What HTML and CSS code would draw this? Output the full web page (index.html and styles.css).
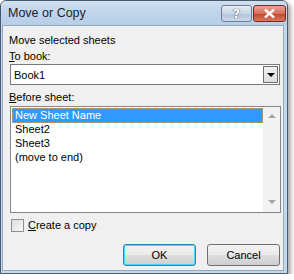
FILE: index.html
```html
<!DOCTYPE html>
<html lang="en">
<head>
    <meta charset="UTF-8">
    <title>Move or Copy</title>

    <link rel="stylesheet" href="styles.css">
</head>
<body>

<div class="window">
    <div class="titlebar">
        <span class="title">Move or Copy</span>
        <div class="caption-buttons">
            <span class="cap-btn help">?</span>
            <span class="cap-btn close">
                <svg width="11" height="9" viewBox="0 0 11 9">
                    <path d="M1 0.5 L10 8.5 M10 0.5 L1 8.5" stroke="#fff" stroke-width="2.4" fill="none"/>
                </svg>
            </span>
        </div>
    </div>

    <div class="client">
        <div class="label">Move selected sheets</div>
        <div class="label"><u>T</u>o book:</div>

        <div class="combo">
            <span class="combo-value">Book1</span>
            <span class="combo-arrow"></span>
        </div>

        <div class="label label-list"><u>B</u>efore sheet:</div>

        <div class="listbox">
            <ul class="list-items">
                <li class="selected">New Sheet Name</li>
                <li>Sheet2</li>
                <li>Sheet3</li>
                <li>(move to end)</li>
            </ul>
            <div class="scrollbar">
                <span class="arrow-up"></span>
                <span class="arrow-down"></span>
            </div>
        </div>

        <label class="check-row">
            <span class="checkbox"></span>
            <span><u>C</u>reate a copy</span>
        </label>

        <div class="buttons">
            <button class="btn default" type="button">OK</button>
            <button class="btn" type="button">Cancel</button>
        </div>
    </div>
</div>

</body>
</html>
```

FILE: styles.css
```css
body {
    margin: 0;
    background: #fff;
    font: 11px "Liberation Sans", Arial, sans-serif;
    color: #000;
}

.window {
    width: 286px;
    height: 272px;
    border: 1px solid #4a5a6a;
    border-radius: 6px 6px 0 0;
    background: #c3d8ee;
    box-shadow: 3px 3px 4px rgba(0, 0, 0, 0.35);
    display: flex;
    flex-direction: column;
    overflow: hidden;
}

.titlebar {
    height: 24px;
    display: flex;
    align-items: flex-start;
    justify-content: space-between;
    background: linear-gradient(#cfdff0, #bcd3ea 60%, #b7cfe8);
}

.title {
    font-size: 12.5px;
    color: #1e1e2e;
    padding: 5px 0 0 7px;
}

.caption-buttons {
    display: flex;
    gap: 1px;
    padding: 4px 1px 0 0;
}

.cap-btn {
    height: 15px;
    border: 1px solid #6d7e95;
    border-radius: 3px;
    display: flex;
    align-items: center;
    justify-content: center;
}

.help {
    width: 29px;
    background: linear-gradient(#e4ecf5, #c8d6e6 50%, #b3c4d9 51%, #c9d8ea);
    color: #fff;
    font: bold 13px "DejaVu Sans", sans-serif;
    text-shadow: 0 0 1px #3a4a66, 0 0 1px #3a4a66;
}

.close {
    width: 31px;
    border-color: #7a2a22;
    background: linear-gradient(#e8a493, #d46f5c 50%, #c1432e 51%, #d77a5c);
}

.client {
    flex: 1;
    margin: 0 3px 2px 1px;
    padding: 6px 0 0 6px;
    background: #f0f0f0;
    border: 1px solid #94a8c0;
}

.label {
    height: 16px;
    line-height: 16px;
}

.combo {
    width: 268px;
    height: 19px;
    margin-left: 1px;
    border: 1px solid #7a7a7a;
    background: #fff;
    display: flex;
    align-items: center;
    justify-content: space-between;
}

.combo-value {
    padding-left: 3px;
}

.combo-arrow {
    width: 13px;
    height: 15px;
    margin-right: 1px;
    border: 1px solid #6f6f6f;
    background: linear-gradient(#f2f2f2, #dcdcdc);
    position: relative;
}

.combo-arrow::after {
    content: "";
    position: absolute;
    left: 3px;
    top: 6px;
    border-left: 4px solid transparent;
    border-right: 4px solid transparent;
    border-top: 4px solid #000;
}

.label-list {
    margin-top: 4px;
}

.listbox {
    width: 269px;
    height: 105px;
    margin: 1px 0 0 1px;
    border: 1px solid #828790;
    background: #fff;
    display: flex;
}

.list-items {
    list-style: none;
    margin: 0;
    padding: 1px 0 0 1px;
    flex: 1;
}

.list-items li {
    height: 13px;
    line-height: 13px;
    padding-left: 2px;
    border: 1px solid transparent;
    margin-bottom: -1px;
}

.list-items li.selected {
    background: #3399ff;
    color: #fff;
    border: 1px dotted #c8a070;
}

.scrollbar {
    width: 17px;
    background: #f2f2f2;
    display: flex;
    flex-direction: column;
    justify-content: space-between;
    align-items: center;
    padding: 7px 0 8px;
}

.arrow-up {
    border-left: 4px solid transparent;
    border-right: 4px solid transparent;
    border-bottom: 4px solid #a6a6a6;
}

.arrow-down {
    border-left: 4px solid transparent;
    border-right: 4px solid transparent;
    border-top: 4px solid #a6a6a6;
}

.check-row {
    display: flex;
    align-items: center;
    gap: 4px;
    margin: 5px 0 0 2px;
    height: 14px;
}

.checkbox {
    width: 11px;
    height: 11px;
    border: 1px solid #8e8f8f;
    background: linear-gradient(135deg, #dcdcdc, #fbfbfb);
}

.buttons {
    display: flex;
    justify-content: flex-end;
    gap: 11px;
    width: 271px;
    margin-top: 12px;
}

.btn {
    width: 73px;
    height: 22px;
    border: 1px solid #707070;
    border-radius: 3px;
    background: linear-gradient(#f2f2f2, #ebebeb 50%, #dddddd 51%, #cfcfcf);
    font: 11px "Liberation Sans", Arial, sans-serif;
    color: #000;
    padding: 0;
}

.btn.default {
    border-color: #3c7fb1;
    box-shadow: inset 0 0 0 1px #48d6f6;
}
```
